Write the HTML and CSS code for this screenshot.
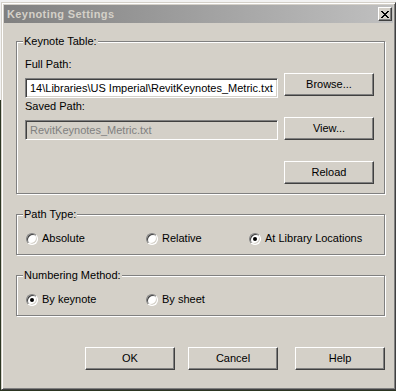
FILE: index.html
```html
<!DOCTYPE html>
<html lang="en">
<head>
    <meta charset="UTF-8">
    <title>Keynoting Settings</title>
    <link rel="stylesheet" href="styles.css">
</head>
<body>
    <div class="window">
        <div class="titlebar">
            <span class="title">Keynoting Settings</span>
            <button type="button" class="close-btn" aria-label="Close">
                <svg width="8" height="7" viewBox="0 0 8 7" shape-rendering="crispEdges">
                    <path fill="#000" d="M0 0h2v1H0zM6 0h2v1H6zM1 1h2v1H1zM5 1h2v1H5zM2 2h4v1H2zM3 3h2v1H3zM2 4h4v1H2zM1 5h2v1H1zM5 5h2v1H5zM0 6h2v1H0zM6 6h2v1H6z"/>
                </svg>
            </button>
        </div>

        <div class="dialog">
            <div class="group group-table">
                <span class="group-title">Keynote Table:</span>
                <div class="path-fields">
                    <div class="field-label">Full Path:</div>
                    <div class="textbox">14\Libraries\US Imperial\RevitKeynotes_Metric.txt</div>
                    <div class="field-label">Saved Path:</div>
                    <div class="textbox disabled">RevitKeynotes_Metric.txt</div>
                </div>
                <div class="path-buttons">
                    <button type="button" class="btn">Browse...</button>
                    <button type="button" class="btn">View...</button>
                    <button type="button" class="btn">Reload</button>
                </div>
            </div>

            <div class="group group-radios">
                <span class="group-title">Path Type:</span>
                <div class="radio-row">
                    <label class="radio"><span class="radio-mark"></span>Absolute</label>
                    <label class="radio"><span class="radio-mark"></span>Relative</label>
                    <label class="radio"><span class="radio-mark checked"></span>At Library Locations</label>
                </div>
            </div>

            <div class="group group-radios">
                <span class="group-title">Numbering Method:</span>
                <div class="radio-row">
                    <label class="radio"><span class="radio-mark checked"></span>By keynote</label>
                    <label class="radio"><span class="radio-mark"></span>By sheet</label>
                </div>
            </div>

            <div class="dialog-buttons">
                <button type="button" class="btn">OK</button>
                <button type="button" class="btn btn-cancel">Cancel</button>
                <button type="button" class="btn btn-help">Help</button>
            </div>
        </div>
    </div>
</body>
</html>
```

FILE: styles.css
```css
:root {
    --face: #d4d0c8;
    --shadow: #808080;
    --dark: #404040;
    --light: #ffffff;
}

* {
    margin: 0;
    padding: 0;
    box-sizing: border-box;
}

body {
    font-family: "Liberation Sans", Arial, sans-serif;
    font-size: 11px;
    line-height: 13px;
    color: #000;
    height: 391px;
    overflow: hidden;
    padding: 2px 0 0 1px;
    background: linear-gradient(#f2f2f2 0 100px, #2c3622 100px);
}

.window {
    width: 395px;
    height: 388px;
    display: flex;
    flex-direction: column;
    padding: 2px;
    background-color: var(--face);
    border: 1px solid;
    border-color: var(--face) var(--dark) var(--dark) var(--face);
    box-shadow: inset 1px 1px 0 var(--light), inset -1px -1px 0 var(--shadow);
}

.titlebar {
    height: 18px;
    display: flex;
    align-items: center;
    padding-left: 3px;
    background: linear-gradient(to right, #808080, #c0c0c0);
}

.title {
    font-weight: bold;
    letter-spacing: 0.4px;
    color: var(--face);
}

.close-btn {
    margin-left: auto;
    margin-right: 1px;
    width: 14px;
    height: 14px;
    display: flex;
    align-items: center;
    justify-content: center;
    background-color: var(--face);
    border: 1px solid;
    border-color: var(--light) var(--dark) var(--dark) var(--light);
    box-shadow: inset -1px -1px 0 var(--shadow);
}

.dialog {
    flex: 1;
    padding: 18px 8px 0 12px;
}

.group {
    position: relative;
    border: 1px solid var(--shadow);
    box-shadow: 1px 1px 0 var(--light), inset 1px 1px 0 var(--light);
}

.group + .group {
    margin-top: 20px;
}

.group-title {
    position: absolute;
    top: -7px;
    left: 6px;
    padding: 0 1px;
    background-color: var(--face);
}

.group-table {
    display: flex;
    gap: 6px;
    padding: 0 10px 9px 8px;
}

.path-fields {
    width: 253px;
}

.field-label {
    margin-top: 2px;
}

.field-label:first-child {
    margin-top: 16px;
}

.textbox {
    margin-top: 7px;
    height: 20px;
    padding: 0 4px;
    line-height: 18px;
    white-space: nowrap;
    overflow: hidden;
    background-color: #fff;
    border: 1px solid;
    border-color: var(--shadow) var(--light) var(--light) var(--shadow);
    box-shadow: inset 1px 1px 0 var(--dark), inset -1px -1px 0 var(--face);
}

.textbox.disabled {
    background-color: var(--face);
    color: #808080;
}

.path-buttons {
    display: flex;
    flex-direction: column;
    gap: 21px;
    padding-top: 31px;
}

.btn {
    width: 90px;
    height: 23px;
    font: inherit;
    color: #000;
    background-color: var(--face);
    border: 1px solid;
    border-color: var(--light) var(--dark) var(--dark) var(--light);
    box-shadow: inset -1px -1px 0 var(--shadow);
}

.group-radios {
    padding: 17px 0 10px 9px;
}

.radio-row {
    display: grid;
    grid-template-columns: 120px 103px auto;
    height: 12px;
}

.radio {
    display: flex;
    align-items: center;
    gap: 4px;
    white-space: nowrap;
}

.radio-mark {
    position: relative;
    width: 12px;
    height: 12px;
    flex-shrink: 0;
    border-radius: 50%;
    background-color: #fff;
    border: 1px solid;
    border-color: var(--shadow) var(--light) var(--light) var(--shadow);
    box-shadow: inset 1px 1px 0 var(--dark), inset -1px -1px 0 var(--face);
}

.radio-mark.checked::after {
    content: "";
    position: absolute;
    left: 3px;
    top: 3px;
    width: 4px;
    height: 4px;
    border-radius: 50%;
    background-color: #000;
}

.dialog-buttons {
    display: flex;
    justify-content: flex-end;
    margin-top: 31px;
}

.btn-cancel {
    margin-left: 13px;
}

.btn-help {
    margin-left: 17px;
}
```
